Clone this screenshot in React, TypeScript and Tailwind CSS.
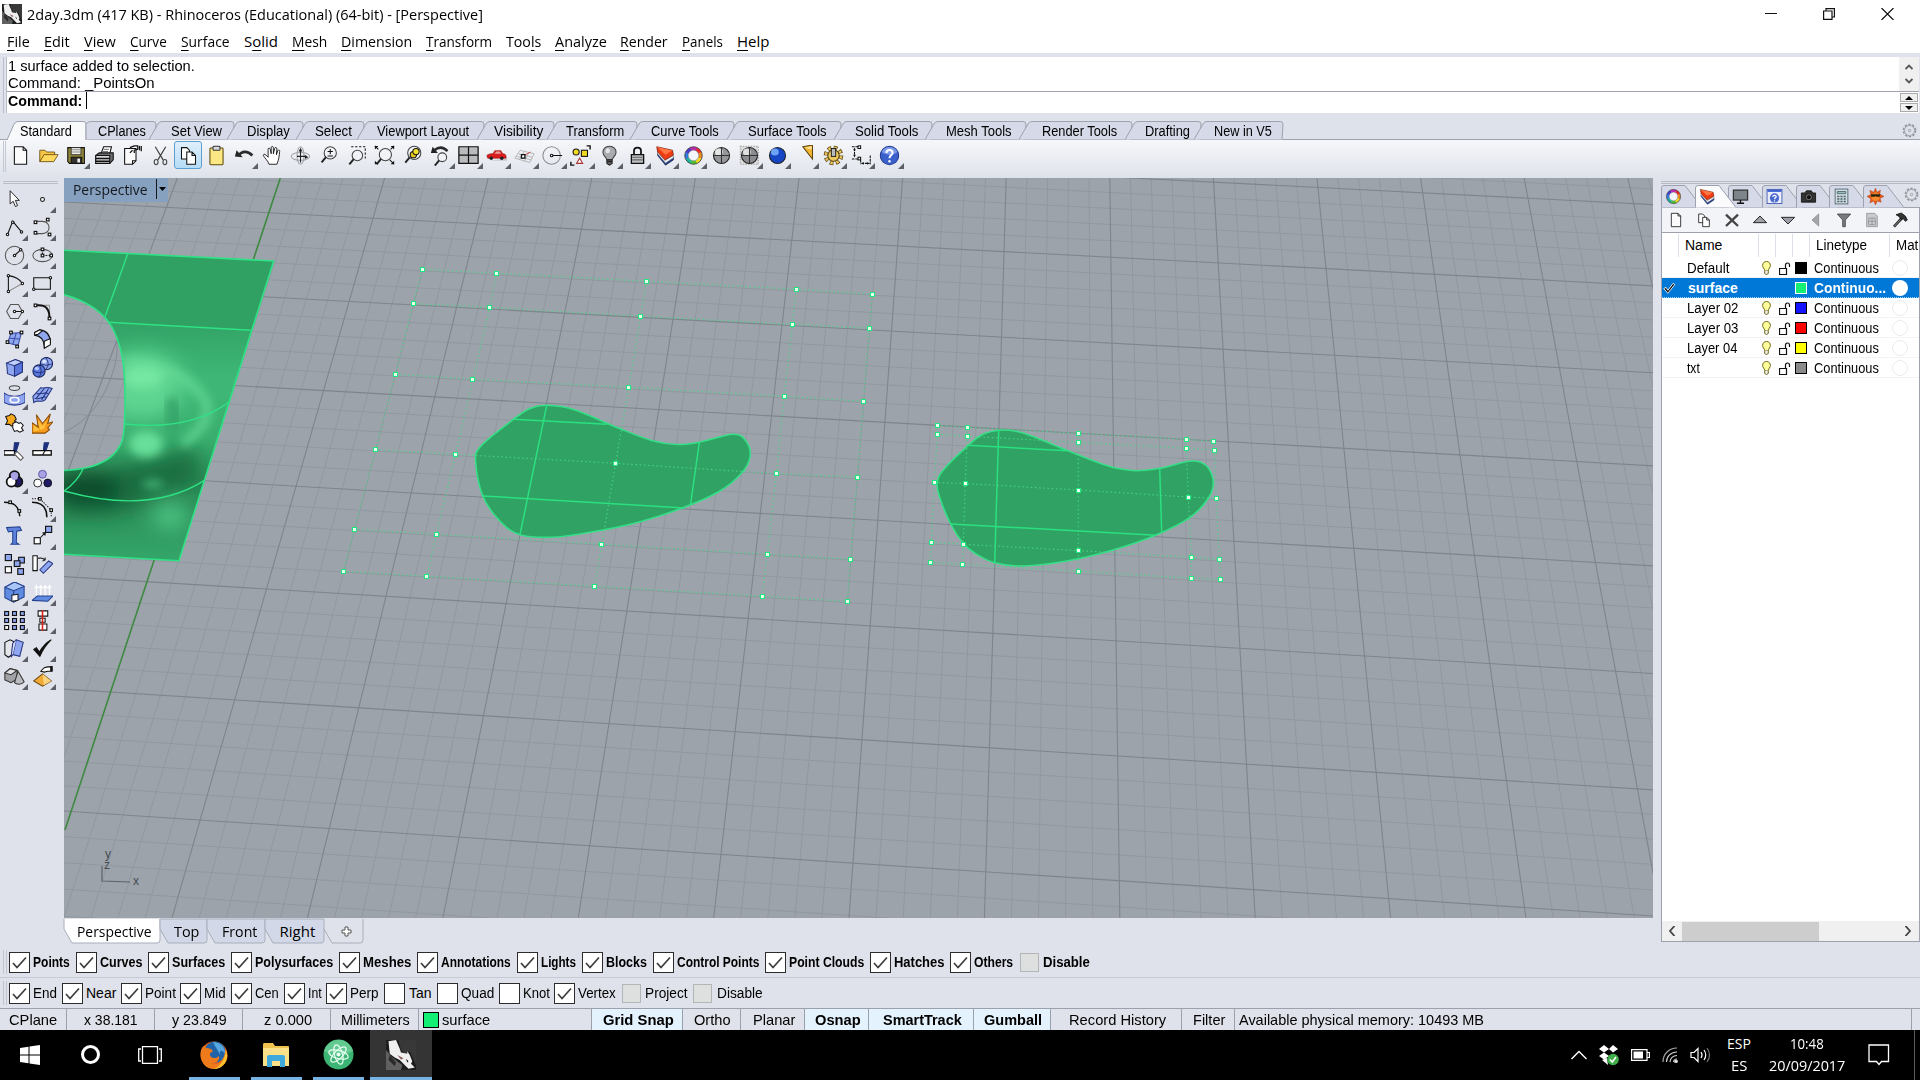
import React, { useLayoutEffect, useRef, useState } from 'react';

type Node = React.ReactNode;
type Pt = [number, number];

/* Text squeezed or stretched horizontally so that it fills `w` pixels. */
function Fit({ w, children, className = '' }: { w: number; children: Node; className?: string }) {
  const ref = useRef<HTMLSpanElement>(null);
  const [k, setK] = useState(1);
  useLayoutEffect(() => {
    if (ref.current) setK(w / ref.current.offsetWidth);
  }, [w]);
  return (
    <span className={'block shrink-0 whitespace-nowrap ' + className} style={{ width: w }}>
      <span ref={ref} className="inline-block origin-left" style={{ transform: `scaleX(${k})` }}>
        {children}
      </span>
    </span>
  );
}

function Ico({ children, s = 24 }: { children: Node; s?: number }) {
  return (
    <svg width={s} height={s} viewBox="0 0 24 24" fill="none" stroke="#111" strokeWidth="1.2" className="block shrink-0">
      {children}
    </svg>
  );
}

function Cell({ children, fly, active }: { children: Node; fly?: boolean; active?: boolean }) {
  return (
    <div
      className={
        'relative flex h-[28px] w-[28.05px] shrink-0 items-center justify-center ' +
        (active ? 'rounded-[3px] border border-[#5e9fd0] bg-gradient-to-b from-[#dff0fc] to-[#b5dcf6]' : '')
      }
    >
      {children}
      {fly && (
        <svg width="6" height="6" viewBox="0 0 6 6" className="absolute right-0 bottom-0">
          <path d="M6 0V6H0Z" fill="#5c5f66" />
        </svg>
      )}
    </div>
  );
}

const Wheel = ({ x = 12, y = 12, r = 7 }: { x?: number; y?: number; r?: number }) => (
  <g strokeWidth="3.8">
    {['#e8262a', '#f08a1c', '#f2d91c', '#4fc22c', '#1cb89a', '#2b7be0', '#4b37c9', '#c02bb0'].map((c, i) => {
      const a = (i * Math.PI) / 4 - 1.2;
      const b = a + Math.PI / 4 + 0.06;
      return (
        <path
          key={c}
          stroke={c}
          d={`M${x + r * Math.cos(a)} ${y + r * Math.sin(a)}A${r} ${r} 0 0 1 ${x + r * Math.cos(b)} ${y + r * Math.sin(b)}`}
        />
      );
    })}
    <circle cx={x} cy={y} r={r + 2} stroke="#333" strokeWidth=".9" />
    <circle cx={x} cy={y} r={r - 2} stroke="#666" strokeWidth=".6" fill="#f5f6fb" />
  </g>
);
const LayerIcon = () => (
  <g strokeWidth=".8">
    <path d="M3 12L12 23 21 17V13L12 19 3 9Z" fill="#243f86" stroke="#16264f" />
    <path d="M3 7L11.500 18 21 12V14.500L12 20.500 3 10Z" fill="#f4f4f6" stroke="#777" strokeWidth=".4" />
    <path d="M2 2L20 6 21 11.500 11.500 17 3 8Z" fill="#ee3d14" stroke="#6e1605" />
    <path d="M2.500 2.300L19.500 6.200 12 11Z" fill="#ff7742" stroke="none" />
  </g>
);
const Sphere = ({ c, l }: { c: string; l: string }) => (
  <g>
    <circle cx="12" cy="12" r="9.200" fill={c} stroke="#222" />
    <ellipse cx="9" cy="8" rx="4.500" ry="4" fill={l} stroke="none" opacity=".85" />
  </g>
);
const Mag = ({ x = 14, y = 9, r = 6 }: { x?: number; y?: number; r?: number }) => (
  <g>
    <circle cx={x} cy={y} r={r} stroke="#444" fill="#f2f4f8" fillOpacity=".7" />
    <path d={`M${x - r * 0.7} ${y + r * 0.7}L${x - r * 0.7 - 5} ${y + r * 0.7 + 6}`} stroke="#222" strokeWidth="2.2" />
  </g>
);
const Doc = () => <path d="M5 2H15L19 6V22H5ZM15 2V6H19" fill="#fbfbfc" />;
const Copy = () => (
  <g fill="#fff">
    <path d="M4 3H10L13 6V16H4Z" />
    <path d="M10 8H16L20 12V22H10ZM16 8V12H20" />
  </g>
);
const Gear = () => (
  <g stroke="#8d9096" strokeWidth="1.200">
    <circle cx="12" cy="12" r="9.800" strokeDasharray="3.800 2.360" strokeWidth="2.200" />
    <circle cx="12" cy="12" r="8" />
    <circle cx="12" cy="12" r="2" />
  </g>
);

type Tool = { i: Node; f?: boolean; a?: boolean };
const TOP: Tool[] = [
  { i: <Doc /> },
  {
    i: (
      <g strokeWidth=".9" stroke="#5b4206">
        <path d="M2 19V6H8L10 8H19V11" fill="#f4c546" />
        <path d="M2 19L7 11H23L18 19Z" fill="#ffd95e" />
      </g>
    ),
  },
  {
    f: true,
    i: (
      <g>
        <path d="M2 3H21V21H4L2 19Z" fill="#8d8439" />
        <path d="M6 3H17V11H6Z" fill="#f1f1ee" strokeWidth=".8" />
        <path d="M6 14H18V21H6Z" fill="#333" />
        <path d="M13 15.500H16V20H13Z" fill="#eee" stroke="none" />
        <path d="M7 5.500H16M7 8H16" stroke="#888" />
      </g>
    ),
  },
  {
    i: (
      <g>
        <path d="M8 10L11 2H20L18 10Z" fill="#fff" />
        <path d="M2 12L6 9H22V17L18 21H2Z" fill="#6b6b70" />
        <path d="M2 12H18V21H2Z" fill="#d6d6da" />
        <path d="M2 15.500H18M2 18.500H18" strokeWidth="1.800" />
        <path d="M11 5H17M10 7.500H16" strokeWidth=".7" />
      </g>
    ),
  },
  {
    i: (
      <g>
        <path d="M3 4H16V18L12 22H3Z" fill="#fafafa" />
        <path d="M12 22V18H16" />
        <path d="M9 3L14 1H18V5L14 6V9M12 6L9 9M20 1V6M22 1V7" strokeWidth="1.400" />
      </g>
    ),
  },
  {
    i: (
      <g stroke="#444">
        <path d="M6 2L15 17M18 2L9 17" strokeWidth="1.400" />
        <ellipse cx="7" cy="19.500" rx="2.200" ry="3" />
        <ellipse cx="17" cy="19.500" rx="2.200" ry="3" />
      </g>
    ),
  },
  { a: true, i: <Copy /> },
  {
    i: (
      <g>
        <rect x="4.500" y="3.500" width="15" height="19" rx="1" fill="#fbe884" stroke="#5b4a0b" />
        <rect x="8" y="1.500" width="8" height="4.500" rx="1" fill="#d8d8d8" stroke="#333" />
      </g>
    ),
  },
  {
    f: true,
    i: (
      <g>
        <path d="M1 13L3 6 10 14Z" fill="#222" stroke="none" />
        <path d="M5 12C9 7 15 6 21 12" strokeWidth="3.200" stroke="#2b2b2e" />
      </g>
    ),
  },
  {
    i: (
      <path
        fill="#fff"
        strokeWidth="1"
        d="M8 22C7 18 3 15 1.500 12C1.500 10.500 3 10 4.500 11.500L7 14V5C7 3 9 3 9.500 5L10.500 10V3C10.500 1.300 13 1.300 13 3V10L14.500 4C15 2 17 2.600 17 4.500L16.500 11L18 6.500C18.800 5 20.500 5.600 20.200 7.500C19.500 13 19.500 16 17 22Z"
      />
    ),
  },
  {
    i: (
      <g stroke="#a2a4aa">
        <ellipse cx="12" cy="13" rx="10.500" ry="4.500" />
        <ellipse cx="12" cy="12" rx="4" ry="10" />
        <path d="M12 6V20M8 13H18" stroke="#222" />
        <path d="M12 3L9.800 7.500H14.200ZM21 14L17 11V16Z" fill="#222" stroke="none" />
      </g>
    ),
  },
  { i: <g><Mag x={14} y={9} r={7} /><path d="M11 7.500H17M14 4.500V10.500M11 12.500H17" /></g> },
  { i: <g><path d="M6 2H22V16" strokeDasharray="2.500 2" /><Mag x={13} y={12} r={6} /></g> },
  {
    i: (
      <g>
        <Mag x={13} y={11} r={7} />
        <path d="M1 5V1H5ZM19 1H23V5ZM23 18V22H19ZM1 18V22H5Z" fill="#111" stroke="none" />
        <path d="M1 1L5 5M23 1L19 5M23 22L18 17" />
      </g>
    ),
  },
  { i: <g><Mag x={14} y={9} r={7.500} /><circle cx="13" cy="11" r="3.600" fill="#e5c71c" /><circle cx="16" cy="7.500" r="3.600" fill="#f6df2c" /></g> },
  {
    f: true,
    i: (
      <g>
        <path d="M1 9L3 2 9 9Z" fill="#222" stroke="none" />
        <path d="M5 6C10 2 15 2 20 7" strokeWidth="3" stroke="#2b2b2e" />
        <Mag x={14} y={14} r={5} />
      </g>
    ),
  },
  { f: true, i: <g strokeWidth="1.400"><path d="M1 2H23V21H1Z" fill="#b9bbbd" /><path d="M12 2V21M1 11.500H23" /></g> },
  {
    f: true,
    i: (
      <g stroke="none">
        <path d="M4 18H24V15Z" fill="#c9cbd0" />
        <path d="M1 12C2 10.500 5 10 8 10L10 6.500H17L19 10C22 10 23 11 23 15H2Z" fill="#dd1d1d" stroke="#8b0d0d" strokeWidth=".7" />
        <path d="M11.500 7.500H16L17 10H10Z" fill="#e8a0a0" />
        <circle cx="6" cy="15" r="2" fill="#222" />
        <circle cx="18" cy="15" r="2" fill="#222" />
      </g>
    ),
  },
  {
    f: true,
    i: (
      <g stroke="#aaa" strokeWidth=".9">
        <path d="M7 6L23 10 18 20 1 15ZM12 7L6 17M17 8.500L12 18.500M5 10L21 14M3 13L19.500 17" />
        <path d="M11 12L19 8" stroke="#c22" />
        <rect x="8.500" y="11" width="4" height="4" stroke="#111" fill="#fff" strokeWidth="1.500" />
      </g>
    ),
  },
  { f: true, i: <g stroke="#8a8c90"><circle cx="11" cy="12" r="10" /><path d="M11 12H23" stroke="#111" /><circle cx="11" cy="12" r="1.500" fill="#fff" stroke="#111" /></g> },
  {
    f: true,
    i: (
      <g>
        <path d="M19 1H23V5M1 19V23H5" strokeWidth="1.600" />
        <circle cx="7" cy="8" r="3.500" fill="#f0d820" />
        <rect x="13" y="6" width="7" height="7" fill="#f0d820" />
        <path d="M11 15L14.500 21H7.500Z" fill="#fff" stroke="#a33" />
      </g>
    ),
  },
  {
    f: true,
    i: (
      <g>
        <path d="M12 1.500C7 1.500 4.500 5 4.500 8.500C4.500 12 8.500 14 9 17H15C15.500 14 19.500 12 19.500 8.500C19.500 5 17 1.500 12 1.500Z" fill="#a9abae" stroke="#444" />
        <path d="M9 17H15V21L12 23 9 21ZM9 19H15" fill="#666" stroke="#222" />
        <ellipse cx="10" cy="6.500" rx="2.500" ry="3" fill="#e4e5e6" stroke="none" />
      </g>
    ),
  },
  {
    f: true,
    i: (
      <g>
        <path d="M8 11V6.500C8 2 16 2 16 6.500V11" strokeWidth="2" />
        <path d="M5 11H19V21H5Z" fill="#bfc0c2" strokeWidth="1.500" />
        <path d="M6 14H18M6 17H18" stroke="#666" />
      </g>
    ),
  },
  { f: true, i: <LayerIcon /> },
  { f: true, i: <Wheel r={8} /> },
  { i: <g><Sphere c="#96989b" l="#f3f3f3" /><path d="M12 3.500V20.500M3.500 12H20.500" stroke="#333" /></g> },
  { f: true, i: <g><path d="M1.500 1.500H22V22H1.500Z" stroke="#999" strokeDasharray="1.500 1.500" fill="#ddd" /><Sphere c="#8a8c90" l="#efefef" /><path d="M12 3.500V20.500M3.500 12H20.500" stroke="#333" /></g> },
  { f: true, i: <Sphere c="#1646c4" l="#7db4ff" /> },
  { f: true, i: <g><path d="M8 2L19 0 19 16Z" fill="#f3b431" stroke="#5d4410" transform="translate(1 0)" /><path d="M11 3L19 1.500 19 5Z" fill="#fce29a" stroke="none" /></g> },
  {
    f: true,
    i: (
      <g>
        <circle cx="12" cy="12" r="8.700" stroke="#5c440a" strokeWidth="5" strokeDasharray="4.100 2.730" />
        <circle cx="12" cy="12" r="8.700" stroke="#e9c662" strokeWidth="3.200" strokeDasharray="2.700 4.130" strokeDashoffset="-.7" />
        <circle cx="12" cy="12" r="6.500" fill="#e9c662" stroke="#5c440a" />
        <rect x="9.500" y="4" width="5" height="9" fill="#b9babc" strokeWidth="1" />
      </g>
    ),
  },
  {
    f: true,
    i: (
      <g>
        <path d="M1 2H9M4 4V13M1 16H9M11 17V22M22 12V22M12 21H21" strokeDasharray="3 1" />
        <path d="M4 3L2.500 6H5.500ZM4 14L2.500 11H5.500ZM12 21L14.500 19.500V22.500ZM21 21L18.500 19.500V22.500Z" fill="#111" stroke="none" />
        <rect x="8" y="1" width="3" height="3" fill="#fff" /><rect x="8" y="14" width="3" height="3" fill="#fff" />
      </g>
    ),
  },
  {
    f: true,
    i: (
      <g>
        <circle cx="12" cy="12" r="10.500" fill="#3b5fcb" stroke="#20398f" />
        <path d="M3 8A10 10 0 0 1 21 8C15 12 9 12 3 8Z" fill="#7e9bea" stroke="none" />
        <path d="M8.500 9C8.500 4.500 15.500 4.500 15.500 9C15.500 11.500 12 11.500 12 15" stroke="#fff" strokeWidth="2.300" />
        <circle cx="12" cy="18.500" r="1.400" fill="#fff" stroke="none" />
      </g>
    ),
  },
];

const Sq = ({ x, y, s = 4, f = '#fff' }: { x: number; y: number; s?: number; f?: string }) => (
  <rect x={x - s / 2} y={y - s / 2} width={s} height={s} fill={f} strokeWidth="1.300" />
);
const Dot = ({ x, y, r = 1.400 }: { x: number; y: number; r?: number }) => <circle cx={x} cy={y} r={r} fill="#fff" />;
const BL = '#8fa6f0';

const SIDE: Tool[] = [
  { i: <path d="M7 2V17L10.500 14 13 20 15.500 19 13 13H17.500Z" fill="#fff" strokeWidth="1" /> },
  { f: true, i: <circle cx="12" cy="12" r="2.200" fill="#fff" /> },
  { f: true, i: <g><path d="M4 20L10 5 20 17" /><Dot x={4} y={20} /><Dot x={10} y={6} /><Dot x={20} y={17} /></g> },
  { f: true, i: <g><path d="M5 5H12C22 5 22 19 12 19H5" stroke="#555" /><Sq x={4} y={6} s={3} /><Sq x={18} y={3} s={3} /><Sq x={4} y={18} s={3} /><Sq x={20} y={20} s={3} /></g> },
  { f: true, i: <g><circle cx="12" cy="12" r="10.500" stroke="#555" /><path d="M12 12L19 5.500" /><Dot x={12} y={12} /><Dot x={19} y={5.500} /></g> },
  { f: true, i: <g><ellipse cx="12" cy="12" rx="11" ry="7" stroke="#555" /><path d="M12 5V12H21" strokeDasharray="2 1.500" /><Sq x={12} y={5} s={3} /><Sq x={12} y={12} s={3} /><Sq x={22} y={12} s={3} /></g> },
  { f: true, i: <g><path d="M5 21V3C12 4 18 7 21 12" /><path d="M5 21L21 12" stroke="#888" /><Dot x={5} y={3} /><Dot x={5} y={21} /><Dot x={21} y={12} /></g> },
  { f: true, i: <g><path d="M2 5.500H21V18.500H2Z" /><Dot x={21} y={5.500} /><Dot x={2} y={18.500} /></g> },
  { f: true, i: <g><path d="M7.500 4H16.500L21 12 16.500 20H7.500L3 12Z" stroke="#555" /><path d="M12 12H21" /><Dot x={12} y={12} /><Dot x={21} y={12} /></g> },
  { f: true, i: <g><path d="M5 5H20V20" stroke="#999" /><path d="M5 5C16 4 20 9 20 20" strokeWidth="2.200" /><Sq x={4} y={5} s={3} /><Sq x={20} y={20} s={3} /></g> },
  { f: true, i: <g><path d="M8 5L20 4 16 19 4 16Z" fill={BL} stroke="#3c4ea6" /><path d="M14 4.500L10 17.500M6 10.500L18 11.500" stroke="#3c4ea6" /><Sq x={8} y={4} s={3} /><Sq x={20} y={4} s={3} /><Sq x={4} y={15} s={3} /><Sq x={15} y={20} s={3} /></g> },
  { f: true, i: <g><path d="M3 4L9 1C17 2 21 7 21 16L14 20C14 12 10 8 3 7Z" fill={BL} /><path d="M3 4L9 1 12 2 7 6 3 7ZM14 14L21 11V18L14 22Z" fill="#fff" /></g> },
  { f: true, i: <g stroke="#26357f"><path d="M3 7L13 3 21 6V17L12 22 4 19Z" fill={BL} /><path d="M3 7L12 10 21 6 13 3Z" fill="#c3d0fa" /><path d="M12 10V22L21 17V6Z" fill="#5a76da" /></g> },
  { f: true, i: <g stroke="#18245e"><circle cx="16.500" cy="7.500" r="7" fill={BL} /><circle cx="8" cy="16" r="7" fill="#5a78e0" /><path d="M1.500 16Q8 20 15 16M8 9Q13 16 8 23M16 1Q21 8 16 14M10 8Q16 11 23 8" strokeWidth=".9" /><ellipse cx="14" cy="5" rx="2.500" ry="2" fill="#dbe4ff" stroke="none" /><ellipse cx="5.500" cy="13" rx="2.500" ry="2" fill="#b9c9ff" stroke="none" /></g> },
  { f: true, i: <g><ellipse cx="12" cy="3.500" rx="6" ry="2.700" stroke="#444" /><path d="M0 9C7 14 17 14 24 9V20C17 24 7 24 0 20Z" fill={BL} stroke="#2c3c8c" /><ellipse cx="12" cy="17" rx="5" ry="3" stroke="#fff" strokeWidth="1.800" /></g> },
  { f: true, i: <g stroke="#26357f"><path d="M1 13L10 3C13 5 16 1 23 4L15 17C10 21 7 16 2 20Z" fill={BL} /><path d="M5 15L14 4M11 17L19 4M5 9.500C10 12 13 7 19 10M3 15C8 18 12 12 16 14" /></g> },
  { i: <g><path d="M2 4L6 3 8 1 12 3 14 7 12 9 15 12 9 15 6 13 2 13 4 9Z" fill="#f7a71c" /><path d="M10 12L14 10 17 12 19 11 22 14 20 17 22 20 18 22 15 20 12 21 10 17Z" fill="#fff" /></g> },
  { i: <g><path d="M0 23V11L7 16 5 2 12 12 21 1 18 12 24 10 18 17 20 19 15 23Z" fill="#f89a1c" stroke="#8a4e08" /><path d="M2 21V14L9 19 7 8 12 15 17 8 14 18Z" fill="#fdc53f" stroke="none" /></g> },
  { i: <g><path d="M11 12L12 2H17L14 12Z" fill="#1c2f7c" stroke="#1c2f7c" /><path d="M0 11H12V16H0Z" fill="#fff" strokeWidth="1.500" /><path d="M12 15L15 12 22 19 19 22Z" fill="#fff" stroke="#555" /></g> },
  { i: <g><path d="M13 11L14 2H19L16 11Z" fill="#1c2f7c" stroke="#1c2f7c" /><path d="M1 11H22V16H1Z" fill="#fff" strokeWidth="1.500" /><path d="M12 16L15 11" /></g> },
  { f: true, i: <g strokeWidth="2"><circle cx="12" cy="8" r="5.500" fill="#a9a2e4" /><circle cx="15.500" cy="14.500" r="5.500" fill="#1f1a66" /><circle cx="8.500" cy="14.500" r="5.500" fill="#fff" /><circle cx="12" cy="8.500" r="4" fill="#a9a2e4" stroke="none" /></g> },
  { i: <g strokeWidth="1"><circle cx="12" cy="6" r="4.500" fill="#a9a2e4" stroke="#554d9a" /><circle cx="18" cy="16" r="4.500" fill="#1f1a66" /><circle cx="6.500" cy="16" r="4.500" fill="#fff" /></g> },
  { i: <g><path d="M0 6C10 6 17 9 18 22" strokeWidth="1.600" /><Sq x={7} y={6} s={3} /><Sq x={17.500} y={16} s={3} /></g> },
  { f: true, i: <g><path d="M0 6C11 6 17 12 17 23" strokeWidth="1.800" /><path d="M0 2H9L22 15V23" strokeDasharray="1.500 1.500" /><Sq x={9} y={2} s={3} /><Sq x={22} y={15} s={3} /></g> },
  { i: <path d="M3 3L18 2 20 6 14.500 7 14 20 17 22H8L10 20V7L5 8Z" fill="#5f82dc" stroke="#24418f" /> },
  { f: true, i: <g><Sq x={19} y={5} s={7} f={BL} /><Sq x={6} y={18} s={7} /><path d="M10 14L15 9M15 9H12M15 9V12" /></g> },
  { i: <g><Sq x={5} y={4} s={7} f={BL} /><Sq x={20} y={7} s={6.500} f={BL} /><Sq x={15} y={11} s={6.500} f={BL} /><Sq x={5} y={18} s={7} /><Sq x={19} y={20} s={6.500} f={BL} /></g> },
  { i: <g><path d="M1 2H6V19H1Z" fill="#fff" /><path d="M7 5C11 4 13 5 15 7M15 7L12 8M15 7V4" /><path d="M9 18L19 8 24 11 13 22Z" fill={BL} stroke="#26357f" /></g> },
  { f: true, i: <g stroke="#24418f"><path d="M1 6L12 0 23 5V17L11 23 1 18Z" fill="#5f8be0" /><path d="M1 6L11 10 23 5 12 0Z" fill="#aac6f7" /><path d="M11 10V23" /><path d="M9 15L16 14V21L9 22Z" fill="#fff" stroke="#222" /></g> },
  { f: true, i: <g><path d="M0 21L6 16H24L18 22Z" fill="#5f8be0" stroke="#24418f" /><path d="M5 15V4M10 15V4M15 15V4M20 15V4M3 7L5 4 7 7M8 7L10 4 12 7M13 7L15 4 17 7M18 7L20 4 22 7" stroke="#fff" strokeWidth="1.400" /></g> },
  { f: true, i: <g>{[3, 12, 21].map((x) => [4, 12, 20].map((y) => <Sq key={x + '-' + y} x={x} y={y} s={4.500} f={x === 3 && y === 20 ? '#fff' : BL} />))}</g> },
  { f: true, i: <g><path d="M7 1H18V7H7ZM9 9.500H15V14H9ZM8 16H17V23H8Z" fill="#fff" /><path d="M12 0V24" stroke="#d8221b" strokeWidth="1.800" /></g> },
  { f: true, i: <g><path d="M1 5L7 2 11 4V18L5 22 1 19Z" fill="#e5e6ea" /><path d="M14 2L22 5 18 21 10 19Z" fill={BL} stroke="#26357f" /><path d="M14 2L10 6 8 22 10 19" fill="#d2dbfb" stroke="#26357f" /></g> },
  { f: true, i: <path d="M2 13L5 11 8.500 16C12 10 15 6 22 2C16 8 12 14 9 21Z" fill="#111" /> },
  { f: true, i: <g stroke="#333"><path d="M1 8L7 3 15 5V15L8 19 1 16Z" fill="#9fa1a5" /><path d="M1 8L8 10 15 5 7 3Z" fill="#e2e3e5" /><path d="M16 6L23 18C20 22 14 21 12 19Z" fill="#b9bbbe" /></g> },
  { f: true, i: <g><path d="M2 17L12 9 22 17 12 23Z" fill="#f0aa35" stroke="#6d470d" /><path d="M12 9L13.500 22 22 17Z" fill="#fbd27d" stroke="none" /><path d="M10 6L14 2 18 1H23V6H18L14 7Z" fill="#fff" /><path d="M22 0V6" strokeWidth="2.500" /></g> },
];

const MENU: [string, number, number, number][] = [
  ['File', 0, 7, 23], ['Edit', 0, 44, 26], ['View', 0, 84, 32], ['Curve', 0, 130, 37], ['Surface', 0, 181, 49],
  ['Solid', 1, 244, 34], ['Mesh', 0, 292, 35], ['Dimension', 0, 341, 71], ['Transform', 0, 426, 66], ['Tools', 3, 506, 35],
  ['Analyze', 0, 555, 52], ['Render', 0, 620, 48], ['Panels', 0, 682, 41], ['Help', 0, 737, 32],
];

/* label, text x, text width, right edge of the tab */
const TABS: [string, number, number, number][] = [
  ['Standard', 20, 52, 86], ['CPlanes', 98, 48, 157], ['Set View', 171, 51, 235], ['Display', 247, 43, 304],
  ['Select', 315, 37, 365], ['Viewport Layout', 377, 92, 485], ['Visibility', 494, 49, 555], ['Transform', 566, 58, 638],
  ['Curve Tools', 651, 68, 735], ['Surface Tools', 748, 79, 842], ['Solid Tools', 855, 63, 933], ['Mesh Tools', 946, 66, 1027],
  ['Render Tools', 1042, 75, 1133], ['Drafting', 1145, 45, 1202], ['New in V5', 1214, 58, 1284],
];

function ToolTabs() {
  return (
    <div className="flex h-[23px] border-b border-[#9da2ae] bg-[#dee2ea] pl-[7px]">
      {TABS.map(([t, tx, tw, r], i) => {
        const l = i === 0 ? 7 : TABS[i - 1][3];
        const w = r - l;
        const on = i === 0;
        return (
          <div key={t} className="relative h-[23px] shrink-0" style={{ width: w }}>
            <svg width={w + 10} height="23" className="absolute top-0 -left-[8px] overflow-visible">
              <path
                d={on ? `M8 23L15 7Q17 4.500 19 4.500H${w + 5}Q${w + 8} 4.500 ${w + 8} 7V23` : `M${i === 1 ? 8 : 0} 22.500L${i === 1 ? 8 : 9} 7Q10 4.500 13 4.500H${w + 4}Q${w + 7} 4.500 ${w + 7} 7L${w + 6} 22.500`}
                fill={on ? '#f8f9fb' : '#d5d9e8'}
                stroke="#9da2ae"
              />
            </svg>
            <div className="relative flex h-[25px] items-center pt-[3px] text-[14px]" style={{ marginLeft: tx - l }}>
              <Fit w={tw}>{t}</Fit>
            </div>
          </div>
        );
      })}
      <div className="grow" />
      <div className="flex w-[18px] items-center pt-[4px]"><Ico s={15}><Gear /></Ico></div>
    </div>
  );
}

/* Ground plane in perspective: both families of lines run to a far horizon. */
const NUM = (a: number, b: number) => Array.from({ length: b - a + 1 }, (_, i) => a + i);
const column = (i: number) => `M${384.6 + 103.6 * i} 178L${172 + 135.4 * i} 918`;
const row = (j: number) => {
  const y = 1 / (4.0269e-4 - 0.1346e-4 * j) - 2226;
  const s = (y + 2226) / 47000;
  return `M64 ${y - 1048 * s}L1653 ${y + 541 * s}`;
};
const COLS = NUM(-20, 65);
const ROWS = NUM(-12, 40);

function smooth(p: Pt[]) {
  const n = p.length;
  let d = `M${p[0][0]} ${p[0][1]}`;
  for (let i = 0; i < n; i++) {
    const a = p[(i + n - 1) % n], b = p[i], c = p[(i + 1) % n], e = p[(i + 2) % n];
    d += `C${b[0] + (c[0] - a[0]) / 6} ${b[1] + (c[1] - a[1]) / 6} ${c[0] - (e[0] - b[0]) / 6} ${c[1] - (e[1] - b[1]) / 6} ${c[0]} ${c[1]}`;
  }
  return d + 'Z';
}
const BLOB1: Pt[] = [
  [546.7, 405.3], [573.6, 409.5], [619, 428.3], [652.4, 440.7], [677.3, 444.5], [698, 442.5], [733, 434.3], [746, 441], [750, 456.7],
  [741.5, 473.3], [718.7, 491.7], [681.4, 508.3], [640, 521.7], [602.7, 530], [557, 537], [520, 534.7], [499, 520], [482.8, 496],
  [475.8, 463.3], [480.3, 446.7], [513.5, 419.3], [530, 408.5],
];
const BLOB2: Pt[] = [
  [999, 430.3], [1013, 430.7], [1033, 436.4], [1066.7, 450.3], [1100, 463.3], [1116.7, 468.3], [1136.7, 470.7], [1160, 468.3],
  [1191.7, 461], [1206.700, 466], [1213.3, 481.7], [1208.3, 498.3], [1190, 517.3], [1156, 535], [1113, 550], [1066.7, 561],
  [1023.3, 566], [994.7, 562.7], [975, 553.3], [963.3, 543.3], [950.7, 524], [940, 498.3], [937.3, 483.3], [943.3, 470],
  [968.3, 445.3], [983, 434.3],
];
const NET1: Pt[][] = [
  [[422.3, 269.3], [496.5, 273.3], [646.6, 281.3], [796.3, 289.3], [872.6, 294.3]],
  [[413.2, 303.7], [489.9, 307.3], [640.8, 316.3], [792.5, 324.3], [869.2, 328.3]],
  [[395.4, 374.3], [472.9, 379.3], [628.8, 387.3], [784.2, 396.3], [863.4, 401.3]],
  [[375.5, 449.7], [455.5, 454.3], [615.5, 463.3], [776.4, 473.7], [857.2, 477.3]],
  [[354.3, 529.3], [436.4, 534.3], [601.8, 544.3], [767.2, 554.3], [850.6, 559.3]],
  [[343.5, 571.3], [426.9, 576.3], [594.8, 586.3], [762.3, 596.3], [847.3, 601.3]],
];
const NET2: Pt[][] = [
  [[937.3, 425.3], [967.3, 427.3], [1078.3, 433.3], [1186.3, 439.3], [1213.3, 441.3]],
  [[937.3, 434.3], [967.3, 436.3], [1078.3, 442.3], [1186.3, 448.3], [1214.3, 450.3]],
  [[934.3, 482.3], [965.3, 483.6], [1078.3, 490], [1188.3, 497], [1216.3, 498.3]],
  [[931.3, 542.3], [963.3, 544.3], [1078.3, 550.6], [1191.3, 557.3], [1219.3, 559.3]],
  [[930.3, 562.3], [962.3, 564.3], [1078.3, 571.3], [1191.3, 578.3], [1220.3, 579.3]],
];
const poly = (p: Pt[]) => 'M' + p.map((q) => q.join(' ')).join('L');
const netPath = (n: Pt[][]) => n.map(poly).join('') + n[0].map((_, c) => poly(n.map((r) => r[c]))).join('');

function Net({ net }: { net: Pt[][] }) {
  return (
    <g>
      <path d={netPath(net)} fill="none" stroke="#48d586" strokeWidth="1.200" strokeDasharray="1.500 2.700" opacity=".9" />
      {net.flat().map(([x, y], i) => (
        <g key={i}>
          <rect x={Math.floor(x) - 2} y={Math.floor(y) - 2} width="5" height="5" fill="#1ee57c" />
          <rect x={Math.floor(x) - 1} y={Math.floor(y) - 1} width="3" height="3" fill="#e9fff2" />
        </g>
      ))}
    </g>
  );
}

const SHEET =
  'M60 250L273.700 261 179 560.700 60 554V470.700C82 470 95 467 108 459C126 446 124 432 125 410C125.500 370 123 350 114 331C105 312 85 300 60 293.600Z';

function Viewport() {
  return (
    <svg width="1589" height="740" viewBox="64 178 1589 740" className="block h-[740px] w-[1589px] bg-[#9da3ab]">
      <defs>
        <clipPath id="sheet"><path d={SHEET} /></clipPath>
        <linearGradient id="fall" x1="0" y1="320" x2="0" y2="560" gradientUnits="userSpaceOnUse">
          <stop offset="0" stopColor="#31a265" />
          <stop offset=".25" stopColor="#3fb877" />
          <stop offset=".5" stopColor="#3aae6e" />
          <stop offset=".66" stopColor="#2b8d57" />
          <stop offset=".78" stopColor="#2c9059" />
          <stop offset="1" stopColor="#34a669" />
        </linearGradient>
        <filter id="wide" x="-60%" y="-60%" width="220%" height="220%"><feGaussianBlur stdDeviation="10" /></filter>
        <filter id="tight" x="-60%" y="-60%" width="220%" height="220%"><feGaussianBlur stdDeviation="5" /></filter>
      </defs>
      <g stroke="#8f959d" strokeWidth="1" opacity=".8">
        <path d={COLS.filter((c) => c % 5).map((c) => column(c / 5)).join('')} />
        <path d={ROWS.filter((c) => c % 5).map((c) => row(c / 5)).join('')} />
      </g>
      <g stroke="#7f858c" strokeWidth="1.100">
        <path d={COLS.filter((c) => c % 5 === 0 && c !== -5).map((c) => column(c / 5)).join('')} />
        <path d={ROWS.filter((c) => c % 5 === 0).map((c) => row(c / 5)).join('')} />
      </g>
      <path d="M280.300 178L65 830" stroke="#3d8a40" strokeWidth="1.600" />
      <path d="M64 432C88 422 106 398 115 365Q118 352 117 340" stroke="#858b92" fill="none" />

      <path d={SHEET} fill="#30a163" />
      <g clipPath="url(#sheet)">
        <path d="M60 320L108 322.300 253 330 180 565 60 556Z" fill="url(#fall)" />
        <g filter="url(#wide)">
          <ellipse cx="142" cy="385" rx="42" ry="34" fill="#5fd692" />
          <path d="M60 474C110 470 145 466 195 446L200 480 110 516 60 514Z" fill="#19693f" opacity=".9" />
          <ellipse cx="86" cy="488" rx="36" ry="16" fill="#0b4a2b" />
          <ellipse cx="170" cy="516" rx="18" ry="12" fill="#4fc886" />
        </g>
        <path d="M125 362C160 362 195 380 207 404C209 420 200 432 182 444" fill="none" stroke="#66da97" strokeWidth="10" opacity=".75" filter="url(#tight)" />
        <path d="M168 400Q180 412 170 428" fill="none" stroke="#34a067" strokeWidth="14" opacity=".8" filter="url(#tight)" />
        <g filter="url(#tight)">
          <ellipse cx="143" cy="377" rx="20" ry="11" fill="#74e8a3" />
          <ellipse cx="146" cy="444" rx="17" ry="13" fill="#68df9a" />
          <ellipse cx="153" cy="484" rx="11" ry="4" fill="#45b87a" />
        </g>
      </g>
      <g fill="none" stroke="#2ee285" strokeWidth="1.600">
        <path d={SHEET} />
        <path d="M127.700 254L105 316.700M108 322.300L250.700 330.300M125 424Q190 431 229 402M64 491Q150 515 204 480.700M83 469Q77 482 64 491" strokeWidth="1.400" />
      </g>

      <g fill="#30a263" stroke="#34df86" strokeWidth="1.600">
        <path d={smooth(BLOB1)} />
        <path d={smooth(BLOB2)} />
      </g>
      <path
        d="M513.500 419.300L607 424.300M546.700 405.300L520 534.700M483 496L684.700 508M699.300 442.700L690.500 505M968.300 445.300L1066.700 450.700M998.700 430L994.700 562.700M950.700 524L1156 535.300M1159.700 469L1161.700 533"
        stroke="#2be080"
        strokeWidth="1.500"
      />
      <Net net={NET1} />
      <Net net={NET2} />

      <path d="M102 866V881L130 882" fill="none" stroke="#5c6269" strokeWidth="1.200" />
      <g fill="#454b51" className="font-['Liberation_Sans'] text-[12px]">
        <text x="133" y="885">x</text>
        <text x="105" y="858">y</text>
        <text x="104" y="869">z</text>
      </g>
    </svg>
  );
}

const VIEWS: [string, number, number][] = [['Perspective', 96, 75], ['Top', 47, 25], ['Front', 58, 35], ['Right', 59, 36]];

function ViewTabs() {
  return (
    <div className="flex h-[26px] items-start pt-[1px]">
      {VIEWS.map(([t, w, tw], i) => (
        <div key={t} className="relative flex h-[24px] shrink-0 items-center justify-end pr-[8.500px]" style={{ width: w }}>
          <svg width={w + 2} height="24" className="absolute top-0 left-0 overflow-visible">
            <path d={i === 0 ? `M0 0V10L8 24H${w - 3}Q${w} 24 ${w} 21V0` : `M0 10L8 24H${w - 3}Q${w} 24 ${w} 21V0H0Z`} fill={i === 0 ? '#fff' : '#d3d8e8'} stroke="#a9aebb" />
          </svg>
          <Fit w={tw} className="relative font-['Open_Sans'] text-[15px] leading-[22px]">{t}</Fit>
        </div>
      ))}
      <div className="relative flex h-[24px] w-[39px] shrink-0 items-center justify-center pl-[5px]">
        <svg width="41" height="24" className="absolute top-0 left-0 overflow-visible">
          <path d="M0 10L8 24H36Q39 24 39 21V0" fill="none" stroke="#a9aebb" />
        </svg>
        <svg width="11" height="11" viewBox="0 0 11 11"><path d="M4 1H7V4H10V7H7V10H4V7H1V4H4Z" fill="#fff" stroke="#555" /></svg>
      </div>
    </div>
  );
}

/* label, box x, text x, text width, state (1 checked, 0 empty, -1 disabled look) */
type Chk = [string, number, number, number, number];
const FILTERS: Chk[] = [
  ['Points', 9, 33, 37, 1], ['Curves', 76, 100, 42, 1], ['Surfaces', 148, 172, 53, 1], ['Polysurfaces', 231, 255, 78, 1],
  ['Meshes', 339, 363, 48, 1], ['Annotations', 417, 441, 70, 1], ['Lights', 517, 541, 35, 1], ['Blocks', 582, 606, 41, 1],
  ['Control Points', 653, 677, 82, 1], ['Point Clouds', 765, 789, 75, 1], ['Hatches', 870, 894, 50, 1], ['Others', 950, 974, 39, 1],
  ['Disable', 1020, 1043, 47, -1],
];
const SNAPS: Chk[] = [
  ['End', 9, 33, 24, 1], ['Near', 62, 86, 30, 1], ['Point', 121, 145, 31, 1], ['Mid', 180, 204, 22, 1], ['Cen', 231, 255, 24, 1],
  ['Int', 284, 308, 14, 1], ['Perp', 326, 350, 29, 1], ['Tan', 384, 409, 23, 0], ['Quad', 437, 461, 33, 0], ['Knot', 499, 523, 27, 0],
  ['Vertex', 554, 578, 38, 1], ['Project', 622, 645, 43, -1], ['Disable', 693, 717, 46, -1],
];

function Checks({ items, bold }: { items: Chk[]; bold?: boolean }) {
  return (
    <div className="flex h-[30px] items-center pl-[3px]">
      <div className="h-[24px] w-[4px] border-x border-[#bfc4cf]" />
      <div className="w-[2px]" />
      {items.map(([t, x, tx, w, s], i) => (
        <div key={t} className="flex shrink-0 items-center" style={{ width: (items[i + 1]?.[1] ?? x + 100) - x }}>
          <div
            className={
              'flex shrink-0 items-center justify-center border ' +
              (s < 0 ? 'h-[19px] w-[19px] border-[#b4b5b6] bg-[#dedfdf]' : 'h-[21px] w-[21px] border-[#2c2c2c] bg-white')
            }
          >
            {s > 0 && (
              <svg width="17" height="15" viewBox="0 0 17 15"><path d="M2 8L6 12.500 15 2.500" fill="none" stroke="#3c3c3c" strokeWidth="1.700" /></svg>
            )}
          </div>
          <div className={'text-[14px] text-black ' + (bold ? 'font-bold' : '')} style={{ marginLeft: tx - x - (s < 0 ? 19 : 21) }}>
            <Fit w={w}>{t}</Fit>
          </div>
        </div>
      ))}
    </div>
  );
}

/* label, cell x, cell end, text x, text width, on */
const STATUS: [string, number, number, number, number, boolean?][] = [
  ['CPlane', 0, 67, 9, 48], ['x 38.181', 67, 155, 84, 54], ['y 23.849', 155, 243, 172, 55], ['z 0.000', 243, 331, 264, 48],
  ['Millimeters', 331, 419, 341, 69], ['surface', 419, 592, 442, 48], ['Grid Snap', 592, 683, 603, 71, true], ['Ortho', 683, 741, 694, 37],
  ['Planar', 741, 805, 753, 42], ['Osnap', 805, 869, 815, 46, true], ['SmartTrack', 869, 974, 883, 79, true],
  ['Gumball', 974, 1051, 984, 58, true], ['Record History', 1051, 1182, 1069, 97], ['Filter', 1182, 1235, 1193, 32],
  ['Available physical memory: 10493 MB', 1235, 1912, 1239, 245],
];

function StatusBar() {
  return (
    <div className="flex h-[22px] border-t border-[#9aa0ac] bg-[#dfe2ea]">
      {STATUS.map(([t, x, e, tx, w, on]) => (
        <div
          key={t}
          className={'flex shrink-0 items-center border-r border-[#9aa0ac] pt-[1px] text-[15px] text-black ' + (on ? 'bg-[#e3f2fd] font-bold' : '')}
          style={{ width: e - x }}
        >
          {t === 'surface' && <div className="ml-[4px] h-[16px] w-[16px] border border-black bg-[#12ef74]" />}
          <div style={{ marginLeft: t === 'surface' ? tx - x - 20 : tx - x }}><Fit w={w}>{t}</Fit></div>
        </div>
      ))}
    </div>
  );
}

const PANEL_TABS: Node[] = [
  <Wheel r={8} />,
  <LayerIcon />,
  <g><rect x="2" y="3" width="20" height="14" fill="#7d858b" stroke="#333" strokeWidth="1.800" /><path d="M12 17V21M7 21.500H17" strokeWidth="2" /></g>,
  <g><rect x="1.500" y="2" width="21" height="20" fill="#e8ecfb" stroke="#3d53b0" /><path d="M2 4H22" stroke="#3d63d0" strokeWidth="3" /><circle cx="12" cy="14" r="6.500" fill="#4a69cf" stroke="none" /><path d="M9.500 12.500C10 9.500 14.500 10 14.300 12.500C14 14 12 14 12 16M12 17.300V19" stroke="#fff" strokeWidth="1.800" /></g>,
  <g><path d="M2 7H7L9 4H16L18 7H22V20H2Z" fill="#333" /><circle cx="12.500" cy="13" r="5" fill="#777" /><circle cx="12.500" cy="13" r="2.400" fill="#111" /></g>,
  <g><rect x="3" y="1.500" width="18" height="21" fill="#d3dde0" stroke="#49636c" /><path d="M6 5H18V8H6Z" fill="#9cc0c2" stroke="#49636c" /><path d="M6 12H18M6 15.500H18M6 19H18" stroke="#49636c" strokeDasharray="3 1.500" strokeWidth="2" /></g>,
  <g><path d="M12 0L14 6 19 3 18 8.500 24 12 18.500 14.500 20 20 14.500 18.500 12 24 9.500 18.500 4 21 5.500 15 0 12 5.500 9 4 3 9.500 6Z" fill="#e8591a" stroke="#a33a0c" strokeWidth=".6" /><circle cx="12" cy="12.500" r="6" fill="#f58a2c" stroke="none" /><path d="M6 9H18V12H13L12 10.500 11 12H6Z" fill="#221" strokeWidth=".6" /></g>,
];
const PANEL_TOOLS: Node[] = [
  <Doc />,
  <Copy />,
  <path d="M3 4L21 21M21 4L3 21" stroke="#444" strokeWidth="3.600" />,
  <path d="M2 16L12 6 22 16Z" fill="#9da0a6" strokeWidth="1.300" />,
  <path d="M2 8L12 18 22 8Z" fill="#9da0a6" strokeWidth="1.300" />,
  <path d="M16 3V21L6 12Z" fill="#a3a5a8" stroke="#8a8c8f" />,
  <path d="M2 3H22L14 12V22H10V12Z" fill="#777a7e" stroke="#444" />,
  <path d="M4 2H16L20 6V22H4ZM7 9H17V19H7ZM12 9V19M7 14H17" fill="#c9cbce" stroke="#8e9094" />,
  <g><path d="M3 22L15 9" strokeWidth="4" stroke="#222" /><path d="M3.500 21.500L14 10" strokeWidth="1.500" stroke="#999" /><path d="M6 4L14 1.500 20 6 23 12 20 14 17 10 13 11 11 7Z" fill="#333" /></g>,
];
const LAYERS: [string, string, number][] = [
  ['Default', '#000000', 42], ['surface', '#12ef74', 50], ['Layer 02', '#1414ff', 51], ['Layer 03', '#ff0000', 51], ['Layer 04', '#ffff00', 50], ['txt', '#8a8a8a', 13],
];

function LayersPanel() {
  return (
    <div className="flex w-[259px] shrink-0 flex-col pt-[3px]">
      <div className="h-[3px] border-y border-[#b5bac5]" />
      <div className="flex h-[23px] items-end">
        {PANEL_TABS.map((ic, i) => (
          <div key={i} className={'relative h-[22px] w-[33.700px] shrink-0 ' + (i === 1 ? 'z-10' : '')}>
            <svg width="46" height="23" className="absolute top-0 left-0 overflow-visible">
              <path d="M.5 22.500V3Q.5 .5 3 .5H24L41 22.500" fill={i === 1 ? '#fbfbfd' : '#d5d9e8'} stroke="#9da2ae" />
            </svg>
            <div className="relative flex h-[22px] w-[25px] items-center justify-center"><Ico s={17}>{ic}</Ico></div>
          </div>
        ))}
        <div className="flex h-[25px] grow items-center justify-end pr-[1px]"><Ico s={15}><Gear /></Ico></div>
      </div>
      <div className="flex h-[26px] items-center border border-[#9da2ae] bg-[#f3f4f8] pb-[1px]">
        {PANEL_TOOLS.map((ic, i) => (
          <div key={i} className="flex w-[28px] shrink-0 items-center justify-center"><Ico s={16}>{ic}</Ico></div>
        ))}
      </div>
      <div className="flex grow flex-col border-x border-b border-[#9da2ae] bg-white">
        <div className="flex h-[24px] pt-[1px] text-[14px] text-black">
          <div className="w-[17px] border-r border-[#dcdfe8]" />
          <div className="flex w-[80px] items-center border-r border-[#dcdfe8] pl-[6px]"><Fit w={37}>Name</Fit></div>
          <div className="w-[17px] border-r border-[#dcdfe8]" />
          <div className="w-[17px] border-r border-[#dcdfe8]" />
          <div className="w-[17px] border-r border-[#dcdfe8]" />
          <div className="flex w-[80px] items-center border-r border-[#dcdfe8] pl-[6px]"><Fit w={51}>Linetype</Fit></div>
          <div className="flex w-[28px] items-center overflow-hidden pl-[6px]"><Fit w={22}>Mat</Fit></div>
        </div>
        {LAYERS.map(([name, color, w], i) => {
          const on = i === 1;
          return (
            <div
              key={name}
              className={
                'relative top-[1px] flex h-[20px] items-center pt-[1px] text-[14px] ' +
                (on ? 'border-b border-dotted border-[#9fd0ff] bg-[#0078d7] font-bold text-white' : 'border-b border-[#f3f3f6] text-black')
              }
            >
              <div className="w-[25px]">
                {on && <Ico s={14}><path d="M3 13L7 11 10 16 19 4 22 6 10 21Z" fill="#111" stroke="#fff" strokeWidth="1.500" /></Ico>}
              </div>
              <div className="w-[71px]" style={{ paddingLeft: on ? 1 : 0 }}><Fit w={w}>{name}</Fit></div>
              <div className="flex w-[17px] justify-center">
                {!on && (
                  <svg width="9" height="14" viewBox="0 0 9 14" stroke="#6f6a16">
                    <path d="M4.500 .5C2 .5 .6 2.300 .6 4.500C.6 6.500 2.500 7.500 2.700 9.500H6.300C6.500 7.500 8.400 6.500 8.400 4.500C8.400 2.300 7 .5 4.500 .5Z" fill="#ffff9c" />
                    <path d="M2.700 9.500V12.500L4.500 13.500 6.300 12.500V9.500" fill="#eee" />
                  </svg>
                )}
              </div>
              <div className="flex w-[20px] justify-center">
                {!on && (
                  <svg width="12" height="13" viewBox="0 0 12 13" fill="none" stroke="#111">
                    <path d="M.5 6.500H7.500V12.500H.5ZM6.500 6V3C6.500 .3 10.500 .3 10.500 3V5" strokeWidth="1.200" />
                  </svg>
                )}
              </div>
              <div className={'h-[12px] w-[12px] border ' + (on ? 'border-white' : 'border-black')} style={{ backgroundColor: color }} />
              <div className="w-[79px] pl-[7px]">
                {on ? <Fit w={72}>Continuo...</Fit> : <Fit w={65}>Continuous</Fit>}
              </div>
              <div className={'ml-[6px] h-[16px] w-[16px] rounded-full ' + (on ? 'bg-white' : 'border border-[#ececef]')} />
            </div>
          );
        })}
        <div className="grow" />
        <div className="flex h-[20px] items-center bg-[#f0f0f0]">
          <div className="flex w-[20px] justify-center"><svg width="8" height="10" viewBox="0 0 8 10"><path d="M6.500 0L2 5 6.500 10" fill="none" stroke="#444" strokeWidth="1.800" /></svg></div>
          <div className="h-[19px] w-[137px] bg-[#cdcdcd]" />
          <div className="grow" />
          <div className="flex w-[22px] justify-center"><svg width="8" height="10" viewBox="0 0 8 10"><path d="M1.500 0L6 5 1.500 10" fill="none" stroke="#444" strokeWidth="1.800" /></svg></div>
        </div>
      </div>
    </div>
  );
}

const Rhino = () => (
  <g stroke="none">
    <rect width="24" height="24" fill="#1d1d1d" />
    <path d="M10 0H24V20L19 9 16 12 12 8Z" fill="#383838" />
    <path d="M2 1L8 0 11 7 12 10 17 11 17 9 19 12 21 17 20 19 23 22 18 23 14 19 11 16 7 14 3 11Z" fill="#efefef" />
    <path d="M0 8L4 13 9 17 13 20 12 24H0Z" fill="#606060" />
    <path d="M3 12L8 18 7 21 2 16Z" fill="#2a2a2a" />
    <path d="M9 12L14 14.500 12 15.500Z" fill="#8a5a5a" />
    <path d="M16 15L18 17 17 18Z" fill="#111" />
  </g>
);

function Task({ children, open, active, narrow }: { children: Node; open?: boolean; active?: boolean; narrow?: boolean }) {
  return (
    <div className={'flex h-[50px] shrink-0 flex-col items-center ' + (narrow ? 'w-[60px] ' : 'w-[62px] ') + (active ? 'bg-[#343434]' : '')}>
      <div className="flex grow items-center pt-[2px]">{children}</div>
      <div className={'h-[3px] ' + (active ? 'w-full' : 'w-[51px]') + (open ? ' bg-[#76b3e3]' : '')} />
    </div>
  );
}

function Taskbar() {
  return (
    <div className="flex h-[50px] bg-black text-white">
      <Task narrow>
        <svg width="20" height="20" viewBox="0 0 20 20" fill="#fff"><path d="M0 3L8.500 1.700V9.500H0ZM9.500 1.500L20 0V9.500H9.500ZM0 10.500H8.500V18.300L0 17ZM9.500 10.500H20V20L9.500 18.500Z" /></svg>
      </Task>
      <Task narrow><div className="h-[19px] w-[19px] rounded-full border-[3px] border-white" /></Task>
      <Task narrow>
        <svg width="24" height="18" viewBox="0 0 24 18" fill="none" stroke="#fff" strokeWidth="1.300"><path d="M4.500 .6H19.500V17.400H4.500ZM3 3H.7V15H3M21 3H23.300V15H21" /></svg>
      </Task>
      <div className="w-[3px]" />
      <Task open>
        <svg width="28" height="28" viewBox="0 0 28 28">
          <circle cx="14" cy="14" r="13.500" fill="#e8641b" />
          <circle cx="15" cy="11" r="10.500" fill="#2063a8" />
          <path d="M13 1C20 1 26 6 25 13C22 8 19 9 20 14C18 9 15 6 13 1Z" fill="#56a7dd" />
          <path d="M1 9C3 4 5 4 6 7C9 7 12 8 13 10C10 12 9 13 11 16C14 18 17 17 19 15C20 20 15 23 11 22C16 26 24 21 25.500 9C31 18 23 28 14 28C5 28 -1 20 1 9Z" fill="#ef7a1c" />
          <path d="M26 9C30 20 22 28 14 28C20 25 25 19 26 9Z" fill="#fbc02d" />
        </svg>
      </Task>
      <Task open>
        <svg width="28" height="28" viewBox="0 0 28 28">
          <path d="M1 4Q1 2 2 2H11L13 5H26Q27 5 27 6V24H1Z" fill="#f0c24f" />
          <path d="M1 7H27V25H1Z" fill="#fbe08a" />
          <path d="M5 26V16Q5 14 7 14H21Q23 14 23 16V26H18V20H10V26Z" fill="#3fa9dc" />
        </svg>
      </Task>
      <Task open>
        <svg width="31" height="31" viewBox="0 0 31 31" fill="none" stroke="#e9fff4" strokeWidth="1.200">
          <circle cx="15.500" cy="15.500" r="15" fill="#3cb574" stroke="none" />
          <path d="M1 12A15 15 0 0 1 30 12Q15 20 1 12Z" fill="#62c98f" stroke="none" />
          <ellipse cx="15.500" cy="15.500" rx="10" ry="4" transform="rotate(15 15.500 15.500)" />
          <ellipse cx="15.500" cy="15.500" rx="10" ry="4" transform="rotate(75 15.500 15.500)" />
          <ellipse cx="15.500" cy="15.500" rx="10" ry="4" transform="rotate(135 15.500 15.500)" />
          <circle cx="15.500" cy="15.500" r="1.500" fill="#fff" />
        </svg>
      </Task>
      <div className="w-px" />
      <Task open active><Ico s={30}><Rhino /></Ico></Task>
      <div className="grow" />
      <div className="flex items-center gap-[12px]">
        <svg width="16" height="10" viewBox="0 0 16 10" fill="none" stroke="#fff" strokeWidth="1.400"><path d="M.5 9L8 1.500 15.500 9" /></svg>
        <svg width="20" height="21" viewBox="0 0 20 21">
          <path d="M5 0L10 4 5 7.500 0 4ZM14 0L19 4 14 7.500 10 4ZM5 7.500L10 11 5 14.500 0 11ZM3 15L8 13 9 20Z" fill="#fff" />
          <circle cx="14" cy="14.500" r="5.800" fill="#3fae49" />
          <path d="M11 14.500L13.300 17 17 12" fill="none" stroke="#fff" strokeWidth="1.600" />
        </svg>
        <svg width="19" height="12" viewBox="0 0 19 12" fill="none" stroke="#fff"><path d="M.6 .6H16V11.400H.6ZM16 3.500H18.400V8.500H16" strokeWidth="1.200" /><path d="M2.500 2.500H12V9.500H2.500Z" fill="#fff" stroke="none" /></svg>
        <svg width="16" height="16" viewBox="0 0 16 16" fill="none" stroke="#ccc" strokeWidth="1.200"><path d="M1 15C1 7 7 1 15 1" opacity=".8" /><path d="M4.500 15C4.500 9.500 9 5 15 5M8 15C8 11.500 11 8.500 15 8.500M11.500 15C11.500 13.500 13 12 15 12" /><circle cx="14" cy="14.300" r="1.300" fill="#fff" /></svg>
        <svg width="21" height="16" viewBox="0 0 21 16" fill="none" stroke="#fff" strokeWidth="1.200"><path d="M1 5.500H4L8 1.500V14.500L4 10.500H1Z" /><path d="M11 5Q13 8 11 11M14 3Q17.500 8 14 13" /><path d="M17 1Q22 8 17 15" stroke="#777" /></svg>
      </div>
      <div className="ml-[14px] flex w-[28px] flex-col items-center pt-[3px] font-['Open_Sans'] text-[14px] leading-[22px]">
        <Fit w={24}>ESP</Fit>
        <Fit w={16}>ES</Fit>
      </div>
      <div className="ml-[13px] flex w-[82px] flex-col items-center pt-[3px] font-['Open_Sans'] text-[14px] leading-[22px]">
        <Fit w={34}>10:48</Fit>
        <Fit w={76}>20/09/2017</Fit>
      </div>
      <div className="ml-[20px] flex w-[46px] items-center">
        <svg width="22" height="22" viewBox="0 0 22 22" fill="none" stroke="#fff" strokeWidth="1.300"><path d="M1 1H20.500V17.500H13.500L11 20.500 8.500 17.500H1Z" /></svg>
      </div>
      <div className="w-[6px] border-l border-[#5a5a5a]" />
    </div>
  );
}

export default function App() {
  return (
    <div className="flex h-[1080px] w-[1920px] flex-col overflow-hidden bg-[#dfe2ea] font-['Liberation_Sans',sans-serif] text-black">
      <div className="flex h-[28px] items-center bg-white pl-[2px]">
        <Ico s={20}><Rhino /></Ico>
        <div className="ml-[5px] font-['Open_Sans'] text-[15px]"><Fit w={456}>2day.3dm (417 KB) - Rhinoceros (Educational) (64-bit) - [Perspective]</Fit></div>
        <div className="grow" />
        <div className="flex items-center gap-[46px] pr-[26px]">
          <svg width="12" height="12" viewBox="0 0 12 12"><path d="M0 5.500H12" stroke="#111" /></svg>
          <svg width="12" height="12" viewBox="0 0 12 12" fill="none" stroke="#111" strokeWidth="1.200"><path d="M.6 3H9V11.400H.6ZM3 3V.6H11.400V9H9" /></svg>
          <svg width="13" height="12" viewBox="0 0 13 12" fill="none" stroke="#111" strokeWidth="1.200"><path d="M.5 0L12.500 12M12.500 0L.5 12" /></svg>
        </div>
      </div>
      <div className="flex h-[25px] items-center bg-white pl-[7px] font-['Open_Sans'] text-[15px] leading-[22px]">
        {MENU.map(([t, u, x, w], i) => (
          <div key={t} className="shrink-0" style={{ width: (MENU[i + 1]?.[2] ?? x + 60) - x }}>
            <Fit w={w}>{t.slice(0, u)}<span className="underline underline-offset-[3px]">{t[u]}</span>{t.slice(u + 1)}</Fit>
          </div>
        ))}
      </div>
      <div className="flex h-[63px] flex-col pt-[4px]">
        <div className="flex h-[56px]">
          <div className="ml-[3px] w-[4px] border-x border-[#b9bec9]" />
          <div className="flex grow flex-col">
            <div className="flex h-[35px] border-b border-[#a0a4ac] bg-white">
              <div className="grow pl-[1px] text-[15px] leading-[17px] text-black">
                <Fit w={187} className="h-[17px]">1 surface added to selection.</Fit>
                <Fit w={147} className="h-[17px]">Command: _PointsOn</Fit>
              </div>
              <div className="flex w-[20px] flex-col items-center justify-around bg-[#f0f0f0] py-[3px]">
                <svg width="8" height="6" viewBox="0 0 8 6"><path d="M.5 5L4 1.500 7.500 5" fill="none" stroke="#555" strokeWidth="1.800" /></svg>
                <svg width="8" height="6" viewBox="0 0 8 6"><path d="M.5 1L4 4.500 7.500 1" fill="none" stroke="#555" strokeWidth="1.800" /></svg>
              </div>
            </div>
            <div className="flex h-[21px] bg-white">
              <div className="flex grow items-start pl-[1px] text-[15px] font-bold">
                <Fit w={74} className="leading-[18px]">Command:</Fit>
                <div className="ml-[4px] h-[17px] w-px bg-black" />
              </div>
              <div className="flex w-[20px] flex-col items-center justify-center gap-[1px]">
                <div className="flex h-[9px] w-[18px] items-center justify-center border border-[#aaa] bg-[#f0f0f0]"><svg width="8" height="4"><path d="M0 4L4 0 8 4Z" /></svg></div>
                <div className="flex h-[9px] w-[18px] items-center justify-center border border-[#aaa] bg-[#f0f0f0]"><svg width="8" height="4"><path d="M0 0L4 4 8 0Z" /></svg></div>
              </div>
            </div>
          </div>
          <div className="w-[1px]" />
        </div>
        <div className="mt-[3px] h-px bg-[#bcc1cb]" />
      </div>
      <div className="pt-[1px]"><ToolTabs /></div>
      <div className="flex h-[38px] items-start bg-gradient-to-b from-[#f6f7fa] to-[#dee2ea] pt-[1px]">
        <div className="ml-[3px] h-[31px] w-[3px] border-x border-[#c3c8d2]" />
        {TOP.map((t, i) => (
          <Cell key={i} fly={t.f} active={t.a}><Ico s={21}>{t.i}</Ico></Cell>
        ))}
      </div>
      <div className="flex h-[764px]">
        <div className="w-[64px] shrink-0 pt-[3px]">
          <div className="ml-[3px] h-[3px] w-[55px] border-y border-[#b9bec9]" />
          <div className="mt-[1px] grid w-[56px] grid-cols-[28px_28px]">
            {SIDE.map((t, i) => (
              <div key={i} className="h-[28.090px]"><Cell fly={t.f}><Ico s={21}>{t.i}</Ico></Cell></div>
            ))}
          </div>
        </div>
        <div className="relative w-[1589px] shrink-0">
          <Viewport />
          <div className="absolute top-0 left-0 flex h-[24px] w-[104px] items-center bg-[#86a1c0] pb-[2px] pl-[9px] font-['Open_Sans'] text-[15px] leading-[22px] text-[#17191c]">
            <Fit w={75}>Perspective</Fit>
            <div className="ml-[8px] h-[20px] w-px bg-[#15181c]" />
            <svg width="7" height="4" className="ml-[2px]"><path d="M0 0H7L3.500 4Z" /></svg>
          </div>
          <ViewTabs />
        </div>
        <div className="w-[8px] shrink-0" />
        <LayersPanel />
      </div>
      <div className="pt-[5px]"><Checks items={FILTERS} bold /></div>
      <div className="h-px bg-[#c6cad3]" />
      <div className="h-[30px]"><Checks items={SNAPS} /></div>
      <StatusBar />
      <Taskbar />
    </div>
  );
}
